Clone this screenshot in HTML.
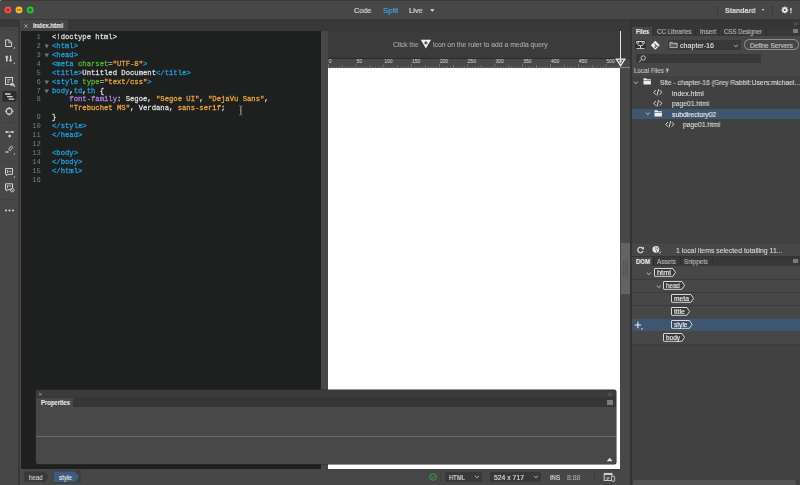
<!DOCTYPE html>
<html lang="en"><head><meta charset="utf-8"><title>index.html</title>
<style>
html,body{margin:0;padding:0;overflow:hidden}
html{width:800px;height:485px;background:#414141}
body{width:800px;height:485px;overflow:hidden;background:#414141;position:relative;font-family:"Liberation Sans", sans-serif}
body>div,body>svg,body>span{position:absolute;display:block}
svg{overflow:visible}
.t,.cl,.ln{will-change:transform}
.t{white-space:pre;line-height:10px;-webkit-text-stroke:.1px currentColor;transform-origin:0 50%;letter-spacing:0}
.cl{left:52px;height:8.906px;line-height:8.906px;font:7.22px/8.906px "Liberation Mono", monospace;-webkit-text-stroke:.28px currentColor;white-space:pre;color:#dadada}
.ln{left:21.2px;width:19.8px;text-align:right;height:8.906px;font:7.22px/8.906px "Liberation Mono", monospace;color:#7a7a7a}
</style></head>
<body>
<div style="left:0px;top:0px;width:800px;height:19px;background:#474747;"></div>
<div style="left:0px;top:0px;width:800px;height:1px;background:#3a3a3a;"></div>
<svg style="left:0;top:0" width="40" height="19" viewBox="0 0 40 19"><circle cx="7.900" cy="9.900" r="3.450" fill="#f0504c"/><circle cx="19" cy="9.900" r="3.450" fill="#f6b72e"/><circle cx="30.200" cy="9.900" r="3.450" fill="#2bc63c"/></svg>
<div style="left:0px;top:0px;width:1.2px;height:1px;background:#9a9a8c;"></div>
<svg style="left:0;top:0" width="40" height="19" viewBox="0 0 40 19"><g stroke-width="1" fill="none"><path d="M6.500 8.500l2.800 2.800M9.300 8.500l-2.800 2.800" stroke="#8c1a18"/><path d="M17 9.900h4" stroke="#a8700c" stroke-width="1.300"/><path d="M28.200 9.900h4M30.200 7.900v4" stroke="#0f7a1a" stroke-width="1.300"/></g></svg>
<svg style="left:429px;top:8px" width="7" height="5" viewBox="0 0 7 5"><path d="M1 1.2h4.6L3.3 3.8z" fill="#e0e0e0"/></svg>
<div style="left:717px;top:4.5px;width:1px;height:11px;background:#3b3b3b;"></div>
<div style="left:772px;top:4.5px;width:1px;height:11px;background:#3b3b3b;"></div>
<svg style="left:760px;top:8px" width="6" height="5" viewBox="0 0 6 5"><path d="M1.700 1.100h2.700L3.050 3z" fill="#cfcfcf"/></svg>
<svg style="left:780px;top:5px" width="16" height="10" viewBox="0 0 16 10"><g transform="translate(4.800 4.900)"><circle r="1.800" fill="none" stroke="#e8e8e8" stroke-width="1.600"/><rect x="-0.700" y="-3.350" width="1.400" height="1.100" fill="#e8e8e8" transform="rotate(0)"/><rect x="-0.700" y="-3.350" width="1.400" height="1.100" fill="#e8e8e8" transform="rotate(45)"/><rect x="-0.700" y="-3.350" width="1.400" height="1.100" fill="#e8e8e8" transform="rotate(90)"/><rect x="-0.700" y="-3.350" width="1.400" height="1.100" fill="#e8e8e8" transform="rotate(135)"/><rect x="-0.700" y="-3.350" width="1.400" height="1.100" fill="#e8e8e8" transform="rotate(180)"/><rect x="-0.700" y="-3.350" width="1.400" height="1.100" fill="#e8e8e8" transform="rotate(225)"/><rect x="-0.700" y="-3.350" width="1.400" height="1.100" fill="#e8e8e8" transform="rotate(270)"/><rect x="-0.700" y="-3.350" width="1.400" height="1.100" fill="#e8e8e8" transform="rotate(315)"/></g><rect x="10.300" y="2.900" width="1.300" height="3.500" fill="#e6e6e6"/><rect x="10.300" y="7" width="1.300" height="1.100" fill="#e6e6e6"/></svg>
<div style="left:0px;top:19px;width:632px;height:12px;background:#383838;"></div>
<div style="left:20px;top:19.5px;width:47.5px;height:11.5px;background:#454545;border-radius:1px 1px 0 0"></div>
<svg style="left:23.8px;top:23.800px" width="5" height="5" viewBox="0 0 5 5"><path d="M.4.400l3.300 3.300M3.700.400l-3.300 3.300" stroke="#a8a8a8" stroke-width=".85" fill="none"/></svg>
<div style="left:0px;top:19px;width:17.9px;height:466px;background:#474747;"></div>
<div style="left:17.9px;top:19px;width:1.7px;height:466px;background:#383838;"></div>
<div style="left:19.6px;top:19px;width:1.7px;height:466px;background:#4a4a4a;"></div>
<div style="left:0px;top:19px;width:17.9px;height:7.8px;background:#383838;"></div>
<div style="left:3px;top:29.1px;width:11px;height:1.1px;background:#3d3d3d;"></div>
<div style="left:2px;top:69.5px;width:13.5px;height:1px;background:#404040;"></div>
<div style="left:2px;top:122.3px;width:13.5px;height:1px;background:#404040;"></div>
<div style="left:2px;top:160.5px;width:13.5px;height:1px;background:#404040;"></div>
<div style="left:2px;top:198.5px;width:13.5px;height:1px;background:#404040;"></div>
<svg style="left:0;top:0" width="19" height="220" viewBox="0 0 19 220"><path d="M5.6 39.9h3.6l2.4 2.4v4.2h-6z" fill="none" stroke="#d2d2d2" stroke-width="1"/><path d="M8.8 40v2.8h2.8" fill="none" stroke="#d2d2d2" stroke-width=".8"/><path d="M15 46.8v1.7h-1.7z" fill="#d2d2d2"/><path d="M6.8 55.2l2 2.4h-1.2v4h-1.6v-4h-1.2z" fill="#d2d2d2"/><path d="M10.6 62l-1.9-2.3h1.3v-4.3h1.2v4.3h1.3z" fill="#d2d2d2"/><path d="M15 62.2v1.6h-1.6z" fill="#d2d2d2"/><rect x="5.5" y="77.5" width="7" height="7" fill="none" stroke="#d2d2d2" stroke-width="1"/><path d="M7.2 79.6h3.6M7.2 81h2.6M7.2 82.4h2" stroke="#d2d2d2" stroke-width=".7"/><ellipse cx="12" cy="84.4" rx="2.6" ry="1.7" fill="#d2d2d2" stroke="#474747" stroke-width=".6"/><path d="M13.4 85.2l1.6 1.6" stroke="#d2d2d2" stroke-width="1.1"/><rect x="2.4" y="91" width="14.2" height="10.8" rx="1.6" fill="#2d2d2d"/><path d="M5 94h5.6M7 96.6h5.6M8.6 99.1h5.6" stroke="#d2d2d2" stroke-width="1.3"/><circle cx="9.2" cy="111.3" r="2.9" fill="none" stroke="#d2d2d2" stroke-width="1.1"/><path d="M9.2 107v2M9.2 113.6v2M4.9 111.3h2M11.5 111.3h2" stroke="#d2d2d2" stroke-width="1.1"/><path d="M6 132h7" stroke="#d2d2d2" stroke-width=".9"/><rect x="5.6" y="131" width="2" height="2" fill="#d2d2d2"/><rect x="11.6" y="131" width="2" height="2" fill="#d2d2d2"/><path d="M9.6 134.4v3.2M8.2 135.2l2.8 1.6M11 135.2l-2.8 1.6" stroke="#d2d2d2" stroke-width=".8"/><path d="M8.6 149.4l2.6-3.4 1.6 1.3-2.6 3.4z" fill="none" stroke="#d2d2d2" stroke-width=".9"/><path d="M5.2 152l1.6-1.2v2.4zM9 152l-1.6-1.2v2.4z" fill="#d2d2d2"/><path d="M15 152.9v1.6h-1.6z" fill="#d2d2d2"/><path d="M5.5 168.5h7v5.8h-4.6l-1.4 1.5v-1.5h-1z" fill="none" stroke="#d2d2d2" stroke-width="1"/><path d="M7.4 169.8v3.2" stroke="#d2d2d2" stroke-width=".9"/><path d="M8.4 171.4h2.8" stroke="#d2d2d2" stroke-width=".8"/><path d="M15 175.9v1.6h-1.6z" fill="#d2d2d2"/><path d="M5.5 183.8h7v5.8h-4.6l-1.4 1.5v-1.5h-1z" fill="none" stroke="#d2d2d2" stroke-width="1"/><path d="M7.4 185.1v3.2" stroke="#d2d2d2" stroke-width=".9"/><path d="M8.4 186h2.8" stroke="#d2d2d2" stroke-width=".8"/><circle cx="12.2" cy="190.1" r="1.8" fill="#474747" stroke="#d2d2d2" stroke-width=".8"/><path d="M11 189l2.4 2.2" stroke="#d2d2d2" stroke-width=".7"/><circle cx="6" cy="210.5" r="1.05" fill="#d2d2d2"/><circle cx="9.5" cy="210.5" r="1.05" fill="#d2d2d2"/><circle cx="13" cy="210.5" r="1.05" fill="#d2d2d2"/></svg>
<div style="left:21.2px;top:31px;width:299.8px;height:438px;background:#1e2020;"></div>
<div class="ln" style="top:33.15px">1</div><div class="cl" style="top:33.15px"><span style="color:#dadada">&lt;!doctype html&gt;</span></div><div class="ln" style="top:42.05px">2</div><svg style="left:43.6px;top:44.31px" width="6" height="5" viewBox="0 0 6 5"><path d="M.4.5h4.6L2.7 4.4z" fill="#747474"/></svg><div class="cl" style="top:42.05px"><span style="color:#209dd6">&lt;html&gt;</span></div><div class="ln" style="top:50.96px">3</div><svg style="left:43.6px;top:53.21px" width="6" height="5" viewBox="0 0 6 5"><path d="M.4.5h4.6L2.7 4.4z" fill="#747474"/></svg><div class="cl" style="top:50.96px"><span style="color:#209dd6">&lt;head&gt;</span></div><div class="ln" style="top:59.87px">4</div><div class="cl" style="top:59.87px"><span style="color:#209dd6">&lt;meta </span><span style="color:#54b132">charset</span><span style="color:#b4b4b4">=</span><span style="color:#e8a33d">&quot;UTF-8&quot;</span><span style="color:#209dd6">&gt;</span></div><div class="ln" style="top:68.77px">5</div><div class="cl" style="top:68.77px"><span style="color:#209dd6">&lt;title&gt;</span><span style="color:#dadada">Untitled Document</span><span style="color:#209dd6">&lt;/title&gt;</span></div><div class="ln" style="top:77.68px">6</div><svg style="left:43.6px;top:79.93px" width="6" height="5" viewBox="0 0 6 5"><path d="M.4.5h4.6L2.7 4.4z" fill="#747474"/></svg><div class="cl" style="top:77.68px"><span style="color:#209dd6">&lt;style </span><span style="color:#54b132">type</span><span style="color:#b4b4b4">=</span><span style="color:#e8a33d">&quot;text/css&quot;</span><span style="color:#209dd6">&gt;</span></div><div class="ln" style="top:86.58px">7</div><svg style="left:43.6px;top:88.84px" width="6" height="5" viewBox="0 0 6 5"><path d="M.4.5h4.6L2.7 4.4z" fill="#747474"/></svg><div class="cl" style="top:86.58px"><span style="color:#1e9fd0">body</span><span style="color:#dadada">,</span><span style="color:#1e9fd0">td</span><span style="color:#dadada">,</span><span style="color:#1e9fd0">th</span><span style="color:#dadada"> {</span></div><div class="ln" style="top:95.49px">8</div><div class="cl" style="top:95.49px"><span style="color:#dadada">    </span><span style="color:#aa80e0">font-family</span><span style="color:#dadada">: Segoe, </span><span style="color:#e8a33d">&quot;Segoe UI&quot;</span><span style="color:#dadada">, </span><span style="color:#e8a33d">&quot;DejaVu Sans&quot;</span><span style="color:#dadada">,</span></div><div class="cl" style="top:104.40px"><span style="color:#dadada">    </span><span style="color:#e8a33d">&quot;Trebuchet MS&quot;</span><span style="color:#dadada">, Verdana, </span><span style="color:#e8a33d">sans-serif</span><span style="color:#dadada">;</span></div><div class="ln" style="top:113.30px">9</div><div class="cl" style="top:113.30px"><span style="color:#dadada">}</span></div><div class="ln" style="top:122.21px">10</div><div class="cl" style="top:122.21px"><span style="color:#209dd6">&lt;/style&gt;</span></div><div class="ln" style="top:131.11px">11</div><div class="cl" style="top:131.11px"><span style="color:#209dd6">&lt;/head&gt;</span></div><div class="ln" style="top:140.02px">12</div><div class="ln" style="top:148.93px">13</div><div class="cl" style="top:148.93px"><span style="color:#209dd6">&lt;body&gt;</span></div><div class="ln" style="top:157.83px">14</div><div class="cl" style="top:157.83px"><span style="color:#209dd6">&lt;/body&gt;</span></div><div class="ln" style="top:166.74px">15</div><div class="cl" style="top:166.74px"><span style="color:#209dd6">&lt;/html&gt;</span></div><div class="ln" style="top:175.64px">16</div>
<svg style="left:238px;top:105px" width="6" height="11" viewBox="0 0 6 11"><path d="M1.2.8c1 0 1.6.4 1.6 1.2v7c0 .8-.6 1.2-1.6 1.2M4.4.8c-1 0-1.6.4-1.6 1.2v7c0 .8.6 1.2 1.6 1.2M1.9 5.5h1.8" fill="none" stroke="#8d8d8d" stroke-width=".8"/></svg>
<div style="left:321px;top:31px;width:7px;height:438px;background:#474747;"></div>
<div style="left:328px;top:31px;width:302px;height:27px;background:#3b3b3b;"></div>
<div style="left:328px;top:57.6px;width:302px;height:0.9px;background:#2c2c2c;"></div>
<div style="left:327.5px;top:58.5px;width:302.5px;height:9.5px;background:#484848;"></div>
<div style="left:327.8px;top:67.6px;width:292.6px;height:401.4px;background:#ffffff;"></div>
<div style="left:620.4px;top:68px;width:9.6px;height:401px;background:#484848;"></div>
<div style="left:620.6px;top:243px;width:9.4px;height:51px;background:#636363;"></div>
<div style="left:623.3px;top:260px;width:0.6px;height:17px;background:#545454;"></div>
<div style="left:624.9px;top:260px;width:0.6px;height:17px;background:#545454;"></div>
<div style="left:626.5px;top:260px;width:0.6px;height:17px;background:#545454;"></div>
<svg style="left:328px;top:58.5px" width="302" height="9.5" viewBox="0 0 302 9.5"><rect x="0.00" y="5.10" width=".6" height="4.20" fill="#8a8a8a"/><rect x="2.78" y="7.70" width=".6" height="1.60" fill="#9c9c9c"/><rect x="5.56" y="7.70" width=".6" height="1.60" fill="#9c9c9c"/><rect x="8.33" y="7.70" width=".6" height="1.60" fill="#9c9c9c"/><rect x="11.11" y="7.70" width=".6" height="1.60" fill="#9c9c9c"/><rect x="13.89" y="6.30" width=".6" height="3.00" fill="#9c9c9c"/><rect x="16.67" y="7.70" width=".6" height="1.60" fill="#9c9c9c"/><rect x="19.45" y="7.70" width=".6" height="1.60" fill="#9c9c9c"/><rect x="22.22" y="7.70" width=".6" height="1.60" fill="#9c9c9c"/><rect x="25.00" y="7.70" width=".6" height="1.60" fill="#9c9c9c"/><rect x="27.78" y="5.10" width=".6" height="4.20" fill="#8a8a8a"/><rect x="30.56" y="7.70" width=".6" height="1.60" fill="#9c9c9c"/><rect x="33.34" y="7.70" width=".6" height="1.60" fill="#9c9c9c"/><rect x="36.11" y="7.70" width=".6" height="1.60" fill="#9c9c9c"/><rect x="38.89" y="7.70" width=".6" height="1.60" fill="#9c9c9c"/><rect x="41.67" y="6.30" width=".6" height="3.00" fill="#9c9c9c"/><rect x="44.45" y="7.70" width=".6" height="1.60" fill="#9c9c9c"/><rect x="47.23" y="7.70" width=".6" height="1.60" fill="#9c9c9c"/><rect x="50.00" y="7.70" width=".6" height="1.60" fill="#9c9c9c"/><rect x="52.78" y="7.70" width=".6" height="1.60" fill="#9c9c9c"/><rect x="55.56" y="5.10" width=".6" height="4.20" fill="#8a8a8a"/><rect x="58.34" y="7.70" width=".6" height="1.60" fill="#9c9c9c"/><rect x="61.12" y="7.70" width=".6" height="1.60" fill="#9c9c9c"/><rect x="63.89" y="7.70" width=".6" height="1.60" fill="#9c9c9c"/><rect x="66.67" y="7.70" width=".6" height="1.60" fill="#9c9c9c"/><rect x="69.45" y="6.30" width=".6" height="3.00" fill="#9c9c9c"/><rect x="72.23" y="7.70" width=".6" height="1.60" fill="#9c9c9c"/><rect x="75.01" y="7.70" width=".6" height="1.60" fill="#9c9c9c"/><rect x="77.78" y="7.70" width=".6" height="1.60" fill="#9c9c9c"/><rect x="80.56" y="7.70" width=".6" height="1.60" fill="#9c9c9c"/><rect x="83.34" y="5.10" width=".6" height="4.20" fill="#8a8a8a"/><rect x="86.12" y="7.70" width=".6" height="1.60" fill="#9c9c9c"/><rect x="88.90" y="7.70" width=".6" height="1.60" fill="#9c9c9c"/><rect x="91.67" y="7.70" width=".6" height="1.60" fill="#9c9c9c"/><rect x="94.45" y="7.70" width=".6" height="1.60" fill="#9c9c9c"/><rect x="97.23" y="6.30" width=".6" height="3.00" fill="#9c9c9c"/><rect x="100.01" y="7.70" width=".6" height="1.60" fill="#9c9c9c"/><rect x="102.79" y="7.70" width=".6" height="1.60" fill="#9c9c9c"/><rect x="105.56" y="7.70" width=".6" height="1.60" fill="#9c9c9c"/><rect x="108.34" y="7.70" width=".6" height="1.60" fill="#9c9c9c"/><rect x="111.12" y="5.10" width=".6" height="4.20" fill="#8a8a8a"/><rect x="113.90" y="7.70" width=".6" height="1.60" fill="#9c9c9c"/><rect x="116.68" y="7.70" width=".6" height="1.60" fill="#9c9c9c"/><rect x="119.45" y="7.70" width=".6" height="1.60" fill="#9c9c9c"/><rect x="122.23" y="7.70" width=".6" height="1.60" fill="#9c9c9c"/><rect x="125.01" y="6.30" width=".6" height="3.00" fill="#9c9c9c"/><rect x="127.79" y="7.70" width=".6" height="1.60" fill="#9c9c9c"/><rect x="130.57" y="7.70" width=".6" height="1.60" fill="#9c9c9c"/><rect x="133.34" y="7.70" width=".6" height="1.60" fill="#9c9c9c"/><rect x="136.12" y="7.70" width=".6" height="1.60" fill="#9c9c9c"/><rect x="138.90" y="5.10" width=".6" height="4.20" fill="#8a8a8a"/><rect x="141.68" y="7.70" width=".6" height="1.60" fill="#9c9c9c"/><rect x="144.46" y="7.70" width=".6" height="1.60" fill="#9c9c9c"/><rect x="147.23" y="7.70" width=".6" height="1.60" fill="#9c9c9c"/><rect x="150.01" y="7.70" width=".6" height="1.60" fill="#9c9c9c"/><rect x="152.79" y="6.30" width=".6" height="3.00" fill="#9c9c9c"/><rect x="155.57" y="7.70" width=".6" height="1.60" fill="#9c9c9c"/><rect x="158.35" y="7.70" width=".6" height="1.60" fill="#9c9c9c"/><rect x="161.12" y="7.70" width=".6" height="1.60" fill="#9c9c9c"/><rect x="163.90" y="7.70" width=".6" height="1.60" fill="#9c9c9c"/><rect x="166.68" y="5.10" width=".6" height="4.20" fill="#8a8a8a"/><rect x="169.46" y="7.70" width=".6" height="1.60" fill="#9c9c9c"/><rect x="172.24" y="7.70" width=".6" height="1.60" fill="#9c9c9c"/><rect x="175.01" y="7.70" width=".6" height="1.60" fill="#9c9c9c"/><rect x="177.79" y="7.70" width=".6" height="1.60" fill="#9c9c9c"/><rect x="180.57" y="6.30" width=".6" height="3.00" fill="#9c9c9c"/><rect x="183.35" y="7.70" width=".6" height="1.60" fill="#9c9c9c"/><rect x="186.13" y="7.70" width=".6" height="1.60" fill="#9c9c9c"/><rect x="188.90" y="7.70" width=".6" height="1.60" fill="#9c9c9c"/><rect x="191.68" y="7.70" width=".6" height="1.60" fill="#9c9c9c"/><rect x="194.46" y="5.10" width=".6" height="4.20" fill="#8a8a8a"/><rect x="197.24" y="7.70" width=".6" height="1.60" fill="#9c9c9c"/><rect x="200.02" y="7.70" width=".6" height="1.60" fill="#9c9c9c"/><rect x="202.79" y="7.70" width=".6" height="1.60" fill="#9c9c9c"/><rect x="205.57" y="7.70" width=".6" height="1.60" fill="#9c9c9c"/><rect x="208.35" y="6.30" width=".6" height="3.00" fill="#9c9c9c"/><rect x="211.13" y="7.70" width=".6" height="1.60" fill="#9c9c9c"/><rect x="213.91" y="7.70" width=".6" height="1.60" fill="#9c9c9c"/><rect x="216.68" y="7.70" width=".6" height="1.60" fill="#9c9c9c"/><rect x="219.46" y="7.70" width=".6" height="1.60" fill="#9c9c9c"/><rect x="222.24" y="5.10" width=".6" height="4.20" fill="#8a8a8a"/><rect x="225.02" y="7.70" width=".6" height="1.60" fill="#9c9c9c"/><rect x="227.80" y="7.70" width=".6" height="1.60" fill="#9c9c9c"/><rect x="230.57" y="7.70" width=".6" height="1.60" fill="#9c9c9c"/><rect x="233.35" y="7.70" width=".6" height="1.60" fill="#9c9c9c"/><rect x="236.13" y="6.30" width=".6" height="3.00" fill="#9c9c9c"/><rect x="238.91" y="7.70" width=".6" height="1.60" fill="#9c9c9c"/><rect x="241.69" y="7.70" width=".6" height="1.60" fill="#9c9c9c"/><rect x="244.46" y="7.70" width=".6" height="1.60" fill="#9c9c9c"/><rect x="247.24" y="7.70" width=".6" height="1.60" fill="#9c9c9c"/><rect x="250.02" y="5.10" width=".6" height="4.20" fill="#8a8a8a"/><rect x="252.80" y="7.70" width=".6" height="1.60" fill="#9c9c9c"/><rect x="255.58" y="7.70" width=".6" height="1.60" fill="#9c9c9c"/><rect x="258.35" y="7.70" width=".6" height="1.60" fill="#9c9c9c"/><rect x="261.13" y="7.70" width=".6" height="1.60" fill="#9c9c9c"/><rect x="263.91" y="6.30" width=".6" height="3.00" fill="#9c9c9c"/><rect x="266.69" y="7.70" width=".6" height="1.60" fill="#9c9c9c"/><rect x="269.47" y="7.70" width=".6" height="1.60" fill="#9c9c9c"/><rect x="272.24" y="7.70" width=".6" height="1.60" fill="#9c9c9c"/><rect x="275.02" y="7.70" width=".6" height="1.60" fill="#9c9c9c"/><rect x="277.80" y="5.10" width=".6" height="4.20" fill="#8a8a8a"/><rect x="280.58" y="7.70" width=".6" height="1.60" fill="#9c9c9c"/><rect x="283.36" y="7.70" width=".6" height="1.60" fill="#9c9c9c"/><rect x="286.13" y="7.70" width=".6" height="1.60" fill="#9c9c9c"/><rect x="288.91" y="7.70" width=".6" height="1.60" fill="#9c9c9c"/><rect x="291.69" y="6.30" width=".6" height="3.00" fill="#9c9c9c"/><rect x="294.47" y="7.70" width=".6" height="1.60" fill="#9c9c9c"/><rect x="297.25" y="7.70" width=".6" height="1.60" fill="#9c9c9c"/><rect x="300.02" y="7.70" width=".6" height="1.60" fill="#9c9c9c"/><text x="0.70" y="4.400" font-size="5" fill="#dcdcdc" font-family='"Liberation Sans", sans-serif'>0</text><text x="28.48" y="4.400" font-size="5" fill="#dcdcdc" font-family='"Liberation Sans", sans-serif'>50</text><text x="56.26" y="4.400" font-size="5" fill="#dcdcdc" font-family='"Liberation Sans", sans-serif'>100</text><text x="84.04" y="4.400" font-size="5" fill="#dcdcdc" font-family='"Liberation Sans", sans-serif'>150</text><text x="111.82" y="4.400" font-size="5" fill="#dcdcdc" font-family='"Liberation Sans", sans-serif'>200</text><text x="139.60" y="4.400" font-size="5" fill="#dcdcdc" font-family='"Liberation Sans", sans-serif'>250</text><text x="167.38" y="4.400" font-size="5" fill="#dcdcdc" font-family='"Liberation Sans", sans-serif'>300</text><text x="195.16" y="4.400" font-size="5" fill="#dcdcdc" font-family='"Liberation Sans", sans-serif'>350</text><text x="222.94" y="4.400" font-size="5" fill="#dcdcdc" font-family='"Liberation Sans", sans-serif'>400</text><text x="250.72" y="4.400" font-size="5" fill="#dcdcdc" font-family='"Liberation Sans", sans-serif'>450</text><text x="278.50" y="4.400" font-size="5" fill="#dcdcdc" font-family='"Liberation Sans", sans-serif'>500</text></svg>
<div style="left:620px;top:31px;width:0.9px;height:35px;background:#e2e2e2;"></div>
<div style="left:620.4px;top:67.3px;width:9.6px;height:0.8px;background:#808080;"></div>
<svg style="left:614px;top:57px" width="13" height="11" viewBox="0 0 13 11"><path d="M2.300 2.200h8.600L6.600 8.700z" fill="#484848" stroke="#f4f4f4" stroke-width="1.200" stroke-linejoin="miter"/><path d="M6.600 2.600v3.600M5 4.200h3.200" stroke="#f4f4f4" stroke-width=".9"/></svg>
<svg style="left:420px;top:38.6px" width="12" height="10" viewBox="0 0 12 10"><path d="M.800.700h10.200L5.900 9.400z" fill="#f2f2f2"/><path d="M5.900 2.300v3.200M4.300 3.900h3.200" stroke="#3b3b3b" stroke-width="1.150"/></svg>
<div style="left:36.2px;top:390px;width:579.9px;height:73.7px;background:#484848;border-radius:2px;box-shadow:0 0 0 .5px #2a2a2a"></div>
<div style="left:36.2px;top:390px;width:579.9px;height:7.5px;background:#3b3b3b;border-radius:2px 2px 0 0"></div>
<div style="left:36.2px;top:397.4px;width:579.9px;height:9.6px;background:#363636;"></div>
<div style="left:36.2px;top:397.6px;width:37px;height:9.6px;background:#484848;"></div>
<div style="left:36.2px;top:435.7px;width:579.9px;height:1px;background:#6a6a6a;"></div>
<svg style="left:38px;top:392px" width="5" height="5" viewBox="0 0 5 5"><path d="M.9.9l2.8 2.8M3.7.9L.9 3.7" stroke="#bdbdbd" stroke-width=".6" fill="none"/></svg>
<svg style="left:607.2px;top:392.300px" width="6" height="5" viewBox="0 0 6 5"><path d="M2.6.8L1 2.4l1.6 1.6M5 .8L3.4 2.4 5 4" stroke="#8a8a8a" stroke-width=".6" fill="none"/></svg>
<div style="left:607px;top:400.3px;width:5.5px;height:4.5px;background:#7c7c7c;"></div>
<svg style="left:605.6px;top:457.400px" width="8" height="5" viewBox="0 0 8 5"><path d="M.8 4.2L3.7.8l2.9 3.4z" fill="#e4e4e4"/></svg>
<div style="left:20.7px;top:469px;width:611.3px;height:16px;background:#474747;"></div>
<svg style="left:24px;top:471px" width="60" height="12" viewBox="0 0 60 12"><path d="M.8.6h20.2l4 5.2-4 5.2H.8a.6.6 0 0 1-.6-.6V1.200a.6.6 0 0 1 .6-.6z" fill="#3a3a3a"/><rect x="28.600" y="-.4" width="28.400" height="12.400" rx="1" fill="#3e3e3e"/><path d="M30.200.6h20.6l4.400 5.2-4.400 5.2H30.200a.6.6 0 0 1-.6-.6V1.200a.6.6 0 0 1 .6-.6z" fill="#3f5b7c"/></svg>
<svg style="left:428px;top:472px" width="10" height="10" viewBox="0 0 10 10"><circle cx="5" cy="5" r="3.3" fill="none" stroke="#3da047" stroke-width=".9"/><path d="M3.4 5.1l1.2 1.2 2.2-2.5" fill="none" stroke="#3da047" stroke-width=".9"/></svg>
<div style="left:440.4px;top:472px;width:0.8px;height:10px;background:#3d3d3d;"></div>
<div style="left:445px;top:472px;width:37px;height:10px;background:#383838;border-radius:1.5px"></div>
<svg style="left:474px;top:475px" width="6" height="4" viewBox="0 0 6 4"><path d="M.8.8l2.100 2 2.100-2" fill="none" stroke="#cfcfcf" stroke-width=".8"/></svg>
<div style="left:489.8px;top:472px;width:51.4px;height:10px;background:#383838;border-radius:1.5px"></div>
<svg style="left:533px;top:475px" width="6" height="4" viewBox="0 0 6 4"><path d="M.8.8l2.100 2 2.100-2" fill="none" stroke="#cfcfcf" stroke-width=".8"/></svg>
<div style="left:594.3px;top:472px;width:0.7px;height:10px;background:#3c3c3c;"></div>
<svg style="left:603px;top:472px" width="13" height="11" viewBox="0 0 13 11"><rect x="1.200" y="1.400" width="7.8" height="7" fill="none" stroke="#dedede" stroke-width=".9"/><path d="M1.200 2.300h7.800" stroke="#dedede" stroke-width="1.200"/><rect x="8.6" y="4.200" width="3" height="5" rx=".6" fill="#444" stroke="#dedede" stroke-width=".8"/><path d="M3.6 5.200l1 2.300 1.600-2.600" fill="none" stroke="#dedede" stroke-width=".8"/></svg>
<div style="left:630px;top:19px;width:2.2px;height:466px;background:#333333;"></div>
<div style="left:632.2px;top:19px;width:167.8px;height:466px;background:#414141;"></div>
<div style="left:632.2px;top:19px;width:167.8px;height:8.5px;background:#363636;"></div>
<div style="left:632.2px;top:27.5px;width:167.8px;height:8.3px;background:#383838;"></div>
<div style="left:632.2px;top:27.2px;width:20.3px;height:8.8px;background:#474747;"></div>
<div style="left:632.2px;top:35.8px;width:167.8px;height:40.3px;background:#474747;"></div>
<div style="left:632.2px;top:243.7px;width:167.8px;height:12px;background:#474747;"></div>
<div style="left:632.2px;top:266px;width:167.8px;height:78.2px;background:#474747;"></div>
<div style="left:695px;top:28px;width:0.7px;height:7.5px;background:#2f2f2f;"></div>
<div style="left:719.3px;top:28px;width:0.7px;height:7.5px;background:#2f2f2f;"></div>
<div style="left:766px;top:28px;width:0.7px;height:7.5px;background:#2f2f2f;"></div>
<div style="left:652.5px;top:28px;width:0.5px;height:7.5px;background:#2f2f2f;"></div>
<svg style="left:793px;top:21.5px" width="6" height="4" viewBox="0 0 6 4"><path d="M.8.6l1.500 1.400L.8 3.400M3.200.6l1.500 1.400-1.500 1.400" stroke="#8a8a8a" stroke-width=".6" fill="none"/></svg>
<div style="left:792.6px;top:29.3px;width:5.2px;height:4.2px;background:#7c7c7c;"></div>
<svg style="left:635px;top:40px" width="26" height="11" viewBox="0 0 26 11"><rect x=".2" y=".3" width="10.6" height="9.800" rx="1" fill="#2c2c2c"/><path d="M1.600 1.500h7.800c0 2.800-1.600 4.200-3.900 4.200S1.600 4.300 1.600 1.500z" fill="none" stroke="#e8e8e8" stroke-width=".9"/><path d="M5.500 5.700v2.600M1.400 8.700h8.200" stroke="#e8e8e8" stroke-width=".9"/><circle cx="3.600" cy="2.900" r=".7" fill="#e8e8e8"/><circle cx="7.400" cy="2.900" r=".7" fill="#e8e8e8"/><path d="M20.300.8l4.500 4.500-4.500 4.500-4.500-4.500z" fill="#f0f0f0"/><path d="M19 3.200l3 3M20.300 4.600v3" stroke="#474747" stroke-width=".8"/><circle cx="22" cy="6.200" r=".8" fill="#474747"/><circle cx="20.300" cy="7.600" r=".7" fill="#474747"/></svg>
<div style="left:668px;top:40px;width:72.6px;height:9.6px;background:#383838;border-radius:1.500px"></div>
<svg style="left:669.3px;top:41px" width="10" height="8" viewBox="0 0 10 8"><path d="M.9 1.300h2.600l.8.900h3.900v4.400H.9z" fill="#585858" stroke="#c8c8c8" stroke-width=".8"/><path d="M.9 2.900h7.300" stroke="#c8c8c8" stroke-width=".6"/></svg>
<svg style="left:733px;top:43.5px" width="6" height="4" viewBox="0 0 6 4"><path d="M.8.8l2.100 2 2.100-2" fill="none" stroke="#cfcfcf" stroke-width=".8"/></svg>
<div style="left:744px;top:39.2px;width:54.6px;height:11.2px;background:transparent;border-radius:5.500px;box-shadow:inset 0 0 0 .9px #8e8e8e"></div>
<div style="left:636px;top:53.7px;width:125px;height:9px;background:#383838;border-radius:1px"></div>
<svg style="left:637.5px;top:54.5px" width="9" height="8" viewBox="0 0 9 8"><circle cx="5.200" cy="3" r="2.200" fill="none" stroke="#c4c4c4" stroke-width=".9"/><path d="M3.600 4.600L1 7.200" stroke="#c4c4c4" stroke-width="1"/></svg>
<svg style="left:665.3px;top:68px" width="5" height="6" viewBox="0 0 5 6"><path d="M2.300.4L.3 2.300h1.400v2.300h1.200V2.300h1.400z" fill="#c0c0c0"/><path d="M.9.700h2.800" stroke="#c0c0c0" stroke-width=".5"/></svg>
<div style="left:632.2px;top:109px;width:167.8px;height:10.3px;background:#3e566f;"></div>
<svg style="left:633.4px;top:81px" width="6" height="4" viewBox="0 0 6 4"><path d="M.8.700l2 1.900 2-1.900" fill="none" stroke="#cdcdcd" stroke-width=".9"/></svg>
<svg style="left:642.6px;top:78.3px" width="9" height="8" viewBox="0 0 9 8"><path d="M.5.300h2.800l.7.900h3.900v5.200H.5z" fill="#ededed"/><path d="M.5 2.500h7.400" stroke="#424242" stroke-width=".55"/></svg>
<svg style="left:653.4px;top:89.4px" width="10" height="8" viewBox="0 0 10 8"><path d="M2.900 1L.800 3.300l2.100 2.300M6.700 1l2.100 2.300-2.100 2.300M5.600.1L4 6.500" fill="none" stroke="#dadada" stroke-width=".95"/></svg>
<svg style="left:653.4px;top:99.9px" width="10" height="8" viewBox="0 0 10 8"><path d="M2.900 1L.800 3.300l2.100 2.300M6.700 1l2.100 2.300-2.100 2.300M5.600.1L4 6.500" fill="none" stroke="#dadada" stroke-width=".95"/></svg>
<svg style="left:644.6px;top:112.4px" width="6" height="4" viewBox="0 0 6 4"><path d="M.8.700l2 1.900 2-1.900" fill="none" stroke="#cdcdcd" stroke-width=".9"/></svg>
<svg style="left:653.6px;top:109.8px" width="9" height="8" viewBox="0 0 9 8"><path d="M.5.300h2.800l.7.900h3.900v5.200H.5z" fill="#ededed"/><path d="M.5 2.500h7.400" stroke="#424242" stroke-width=".55"/></svg>
<svg style="left:664.6px;top:120.8px" width="10" height="8" viewBox="0 0 10 8"><path d="M2.900 1L.800 3.300l2.100 2.300M6.700 1l2.100 2.300-2.100 2.300M5.600.1L4 6.500" fill="none" stroke="#dadada" stroke-width=".95"/></svg>
<svg style="left:636px;top:244.500px" width="28" height="11" viewBox="0 0 28 11"><path d="M6.700 3.300A2.750 2.750 0 1 0 7.100 5.900" fill="none" stroke="#e6e6e6" stroke-width="1.150"/><path d="M7.900 1.400v2.800H5.100z" fill="#e6e6e6"/><circle cx="19.900" cy="4.300" r="3.400" fill="#e8e8e8"/><path d="M18.800 1.500l1.500 1.500-.9 1.400 1.400 1.200-.6 1.600M21.900 2.400l-.7 1.200 1.400.9" fill="none" stroke="#474747" stroke-width=".7"/><path d="M22.700 7.400l.9.900 1.500-1.800" fill="none" stroke="#e8e8e8" stroke-width=".8"/></svg>
<div style="left:632.2px;top:255.6px;width:167.8px;height:10.4px;background:#383838;"></div>
<div style="left:632.2px;top:255.6px;width:167.8px;height:1.2px;background:#343434;"></div>
<div style="left:632.2px;top:256.5px;width:20.3px;height:9.7px;background:#474747;"></div>
<div style="left:680px;top:257px;width:0.7px;height:8px;background:#2f2f2f;"></div>
<div style="left:712px;top:257px;width:0.7px;height:8px;background:#2f2f2f;"></div>
<div style="left:652.5px;top:257px;width:0.5px;height:8px;background:#2f2f2f;"></div>
<div style="left:792.6px;top:258.8px;width:5.2px;height:4.2px;background:#7c7c7c;"></div>
<div style="left:632.2px;top:318.5px;width:167.8px;height:12.8px;background:#3e566f;"></div>
<div style="left:632.2px;top:279.2px;width:167.8px;height:0.6px;background:#3c3c3c;"></div>
<div style="left:632.2px;top:292.2px;width:167.8px;height:0.6px;background:#3c3c3c;"></div>
<div style="left:632.2px;top:305.2px;width:167.8px;height:0.6px;background:#3c3c3c;"></div>
<div style="left:632.2px;top:344.2px;width:167.8px;height:0.6px;background:#3c3c3c;"></div>
<svg style="left:646.4px;top:271.6px" width="6" height="4" viewBox="0 0 6 4"><path d="M.8.700l2 1.900 2-1.900" fill="none" stroke="#cdcdcd" stroke-width=".9"/></svg>
<svg style="left:654px;top:268.25px" width="23" height="10" viewBox="0 0 23 10"><path d="M.95 .5H18.90L21.50 4.4 18.90 8.300H.95a.45.45 0 0 1-.45-.45V.95A.45.45 0 0 1 .95.5z" fill="#3a3a3a" stroke="#e8e8e8" stroke-width=".9" stroke-linejoin="round"/></svg>
<svg style="left:655.6px;top:284.6px" width="6" height="4" viewBox="0 0 6 4"><path d="M.8.700l2 1.900 2-1.900" fill="none" stroke="#cdcdcd" stroke-width=".9"/></svg>
<svg style="left:663px;top:281.25px" width="23" height="10" viewBox="0 0 23 10"><path d="M.95 .5H18.90L21.50 4.4 18.90 8.300H.95a.45.45 0 0 1-.45-.45V.95A.45.45 0 0 1 .95.5z" fill="#3a3a3a" stroke="#e8e8e8" stroke-width=".9" stroke-linejoin="round"/></svg>
<svg style="left:671px;top:294.25px" width="24" height="10" viewBox="0 0 24 10"><path d="M.95 .5H19.90L22.50 4.4 19.90 8.300H.95a.45.45 0 0 1-.45-.45V.95A.45.45 0 0 1 .95.5z" fill="#3a3a3a" stroke="#e8e8e8" stroke-width=".9" stroke-linejoin="round"/></svg>
<svg style="left:671px;top:307.25px" width="20" height="10" viewBox="0 0 20 10"><path d="M.95 .5H15.90L18.50 4.4 15.90 8.300H.95a.45.45 0 0 1-.45-.45V.95A.45.45 0 0 1 .95.5z" fill="#3a3a3a" stroke="#e8e8e8" stroke-width=".9" stroke-linejoin="round"/></svg>
<svg style="left:671px;top:320.25px" width="22.5" height="10" viewBox="0 0 22.5 10"><path d="M.95 .5H18.40L21.00 4.4 18.40 8.300H.95a.45.45 0 0 1-.45-.45V.95A.45.45 0 0 1 .95.5z" fill="#384c64" stroke="#e8e8e8" stroke-width=".9" stroke-linejoin="round"/></svg>
<svg style="left:663px;top:333.25px" width="23" height="10" viewBox="0 0 23 10"><path d="M.95 .5H18.90L21.50 4.4 18.90 8.300H.95a.45.45 0 0 1-.45-.45V.95A.45.45 0 0 1 .95.5z" fill="#3a3a3a" stroke="#e8e8e8" stroke-width=".9" stroke-linejoin="round"/></svg>
<svg style="left:634px;top:320.500px" width="10" height="10" viewBox="0 0 10 10"><path d="M3.900.8v6.400M.7 4h6.400" stroke="#f0f0f0" stroke-width="1.100"/><rect x="7.400" y="7.200" width="1.100" height="1.400" fill="#f0f0f0"/></svg>
<div style="left:632.8px;top:479.8px;width:162.8px;height:5.2px;background:#545454;border-radius:3px 3px 0 0"></div>
<span class="t" style="left:353.7px;top:6px;font-size:7.6px;color:#d4d4d4;font-weight:normal;transform:scaleX(0.9528);-webkit-text-stroke:.22px currentColor;">Code</span>
<span class="t" style="left:382.8px;top:6px;font-size:7.6px;color:#3f9fea;font-weight:normal;transform:scaleX(1.0283);-webkit-text-stroke:.22px currentColor;">Split</span>
<span class="t" style="left:409.4px;top:6px;font-size:7.6px;color:#d4d4d4;font-weight:normal;transform:scaleX(0.9758);-webkit-text-stroke:.22px currentColor;">Live</span>
<span class="t" style="left:725.0px;top:6px;font-size:7.4px;color:#dedede;font-weight:bold;transform:scaleX(0.9522);">Standard</span>
<span class="t" style="left:32.8px;top:21px;font-size:6.6px;color:#ececec;font-weight:bold;transform:scaleX(0.9156);">index.html</span>
<span class="t" style="left:393.0px;top:40px;font-size:6.8px;color:#a9a9a9;font-weight:normal;transform:scaleX(0.9784);">Click the</span>
<span class="t" style="left:433.4px;top:40px;font-size:6.8px;color:#a9a9a9;font-weight:normal;transform:scaleX(1.0009);">icon on the ruler to add a media query</span>
<span class="t" style="left:40.5px;top:398px;font-size:6.6px;color:#ececec;font-weight:bold;transform:scaleX(0.8889);">Properties</span>
<span class="t" style="left:29.0px;top:473px;font-size:6.7px;color:#d8d8d8;font-weight:normal;transform:scaleX(0.8999);">head</span>
<span class="t" style="left:59.0px;top:473px;font-size:6.7px;color:#f0f0f0;font-weight:normal;transform:scaleX(0.9444);">style</span>
<span class="t" style="left:448.6px;top:473px;font-size:6.7px;color:#e6e6e6;font-weight:normal;transform:scaleX(0.8782);">HTML</span>
<span class="t" style="left:494.0px;top:473px;font-size:6.7px;color:#e0e0e0;font-weight:normal;transform:scaleX(1.0207);">524 x 717</span>
<span class="t" style="left:549.8px;top:473px;font-size:6.7px;color:#e0e0e0;font-weight:normal;transform:scaleX(0.8964);">INS</span>
<span class="t" style="left:567.0px;top:473px;font-size:6.7px;color:#a8a8a8;font-weight:normal;transform:scaleX(1.0283);">8:88</span>
<span class="t" style="left:635.9px;top:27px;font-size:6.6px;color:#f0f0f0;font-weight:bold;transform:scaleX(0.8848);">Files</span>
<span class="t" style="left:656.5px;top:27px;font-size:6.6px;color:#bdbdbd;font-weight:normal;transform:scaleX(0.9466);">CC Libraries</span>
<span class="t" style="left:700.0px;top:27px;font-size:6.6px;color:#bdbdbd;font-weight:normal;transform:scaleX(0.9697);">Insert</span>
<span class="t" style="left:724.0px;top:27px;font-size:6.6px;color:#bdbdbd;font-weight:normal;transform:scaleX(0.9095);">CSS Designer</span>
<span class="t" style="left:680.0px;top:41px;font-size:6.8px;color:#e2e2e2;font-weight:normal;transform:scaleX(1.0462);">chapter-16</span>
<span class="t" style="left:750.0px;top:41px;font-size:6.8px;color:#d0d0d0;font-weight:normal;transform:scaleX(0.9566);">Define Servers</span>
<span class="t" style="left:634.0px;top:66px;font-size:6.8px;color:#c8c8c8;font-weight:normal;transform:scaleX(0.9231);">Local Files</span>
<span class="t" style="left:660.0px;top:78px;font-size:6.8px;color:#dedede;font-weight:normal;transform:scaleX(0.9909);">Site - chapter-16 (Grey Rabbit:Users:michael...</span>
<span class="t" style="left:672.0px;top:89px;font-size:6.8px;color:#dedede;font-weight:normal;transform:scaleX(1.0231);">index.html</span>
<span class="t" style="left:672.0px;top:99px;font-size:6.8px;color:#dedede;font-weight:normal;transform:scaleX(0.9887);">page01.html</span>
<span class="t" style="left:672.0px;top:110px;font-size:6.8px;color:#f0f0f0;font-weight:normal;transform:scaleX(0.9912);">subdirectory02</span>
<span class="t" style="left:683.0px;top:120px;font-size:6.8px;color:#dedede;font-weight:normal;transform:scaleX(0.9887);">page01.html</span>
<span class="t" style="left:676.0px;top:246px;font-size:6.8px;color:#d6d6d6;font-weight:normal;transform:scaleX(1.0152);">1 local items selected totalling 11...</span>
<span class="t" style="left:636.0px;top:257px;font-size:6.6px;color:#f0f0f0;font-weight:bold;transform:scaleX(0.9096);">DOM</span>
<span class="t" style="left:657.0px;top:257px;font-size:6.6px;color:#bdbdbd;font-weight:normal;transform:scaleX(0.9597);">Assets</span>
<span class="t" style="left:684.0px;top:257px;font-size:6.6px;color:#bdbdbd;font-weight:normal;transform:scaleX(0.9349);">Snippets</span>
<span class="t" style="left:657.1px;top:268px;font-size:6.5px;color:#f4f4f4;font-weight:normal;transform:scaleX(1.1399);">html</span>
<span class="t" style="left:666.1px;top:281px;font-size:6.5px;color:#f4f4f4;font-weight:normal;transform:scaleX(0.9676);">head</span>
<span class="t" style="left:674.1px;top:294px;font-size:6.5px;color:#f4f4f4;font-weight:normal;transform:scaleX(1.0378);">meta</span>
<span class="t" style="left:674.1px;top:307px;font-size:6.5px;color:#f4f4f4;font-weight:normal;transform:scaleX(1.0864);">title</span>
<span class="t" style="left:674.1px;top:320px;font-size:6.5px;color:#f4f4f4;font-weight:normal;transform:scaleX(1.0093);">style</span>
<span class="t" style="left:666.1px;top:333px;font-size:6.5px;color:#f4f4f4;font-weight:normal;transform:scaleX(0.9922);">body</span>
</body></html>
